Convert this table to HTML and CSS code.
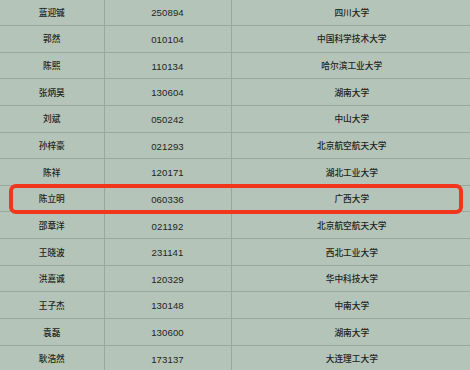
FILE: index.html
```html
<!DOCTYPE html>
<html lang="zh">
<head>
<meta charset="utf-8">
<link rel="stylesheet" href="styles.css">
</head>
<body>
<div class="table">
  <div class="row"><div class="cell name">蓝迎铖</div><div class="cell code">250894</div><div class="cell school">四川大学</div></div>
  <div class="row"><div class="cell name">郭然</div><div class="cell code">010104</div><div class="cell school">中国科学技术大学</div></div>
  <div class="row"><div class="cell name">陈熙</div><div class="cell code">110134</div><div class="cell school">哈尔滨工业大学</div></div>
  <div class="row"><div class="cell name">张炳昊</div><div class="cell code">130604</div><div class="cell school">湖南大学</div></div>
  <div class="row"><div class="cell name">刘斌</div><div class="cell code">050242</div><div class="cell school">中山大学</div></div>
  <div class="row"><div class="cell name">孙梓豪</div><div class="cell code">021293</div><div class="cell school">北京航空航天大学</div></div>
  <div class="row"><div class="cell name">陈祥</div><div class="cell code">120171</div><div class="cell school">湖北工业大学</div></div>
  <div class="row highlight"><div class="cell name">陈立明</div><div class="cell code">060336</div><div class="cell school">广西大学</div></div>
  <div class="row"><div class="cell name">邵章洋</div><div class="cell code">021192</div><div class="cell school">北京航空航天大学</div></div>
  <div class="row"><div class="cell name">王晓波</div><div class="cell code">231141</div><div class="cell school">西北工业大学</div></div>
  <div class="row"><div class="cell name">洪嘉诚</div><div class="cell code">120329</div><div class="cell school">华中科技大学</div></div>
  <div class="row"><div class="cell name">王子杰</div><div class="cell code">130148</div><div class="cell school">中南大学</div></div>
  <div class="row"><div class="cell name">袁磊</div><div class="cell code">130600</div><div class="cell school">湖南大学</div></div>
  <div class="row"><div class="cell name">耿浩然</div><div class="cell code">173137</div><div class="cell school">大连理工大学</div></div>
</div>
</body>
</html>
```
FILE: styles.css
```css
html, body {
  margin: 0;
  padding: 0;
  background: #b5c4b8;
  overflow: hidden;
}
body {
  width: 470px;
  height: 370px;
  font-family: "Noto Sans CJK SC", "Noto Sans", sans-serif;
  color: #222422;
}
.table {
  margin-top: -0.65px;
  display: flex;
  flex-direction: column;
}
.row {
  display: flex;
  height: 26.65px;
  box-sizing: border-box;
  border-bottom: 1px solid #9aa89c;
}
.cell {
  display: flex;
  align-items: center;
  justify-content: center;
  box-sizing: border-box;
  padding-top: 2px;
  font-size: 8.7px;
  font-weight: 500;
  line-height: 1;
}
.name {
  width: 104.5px;
  border-right: 1px solid #9aa89c;
}
.code {
  width: 127px;
  border-right: 1px solid #9aa89c;
  font-size: 9.6px;
  font-weight: 400;
  font-family: "Liberation Sans", "Noto Sans", sans-serif;
  letter-spacing: 0.1px;
}
.school {
  flex: 1;
  padding-left: 2px;
}
.highlight {
  position: relative;
}
.highlight::after {
  content: "";
  position: absolute;
  left: 9px;
  right: 7px;
  top: -2px;
  bottom: -2.5px;
  border: 4px solid #f2361c;
  border-radius: 7px;
  pointer-events: none;
}
```
